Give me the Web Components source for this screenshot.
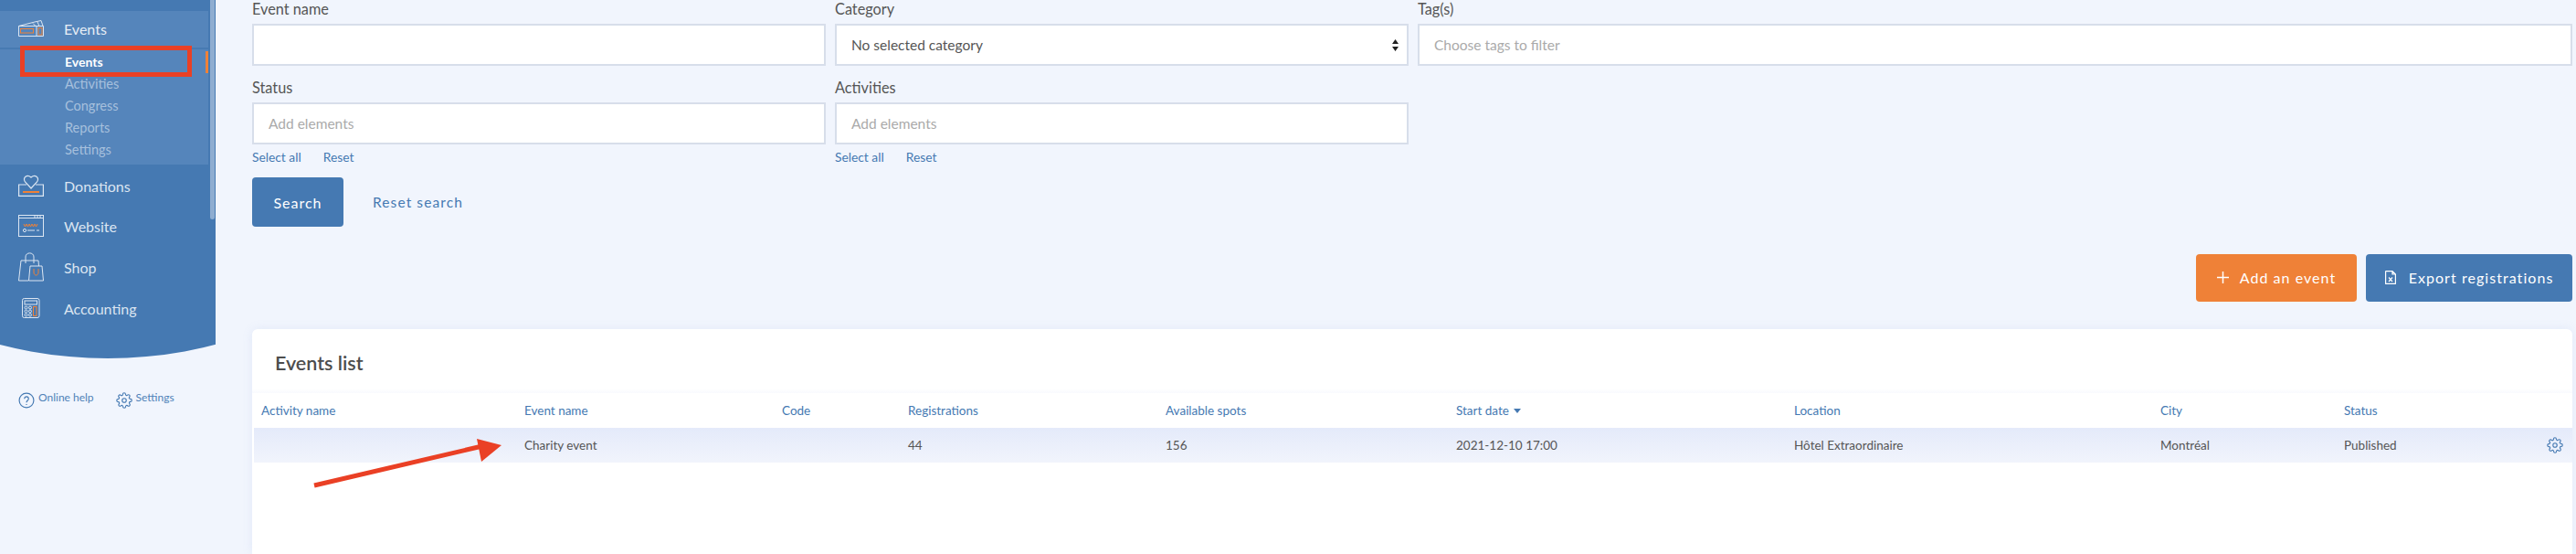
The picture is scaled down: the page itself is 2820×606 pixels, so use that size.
<!DOCTYPE html>
<html>
<head>
<meta charset="utf-8">
<style>
  html, body { margin: 0; height: 606px; overflow: hidden; background: #f1f5fd; }
  body { font-family: "Lato", "Open Sans", sans-serif; color: #4d4d4d; }
  app-shell { width: 2820px; height: 606px; }
</style>
</head>
<body>
<app-shell>
  <side-nav slot="side"></side-nav>
  <filter-form></filter-form>
  <action-bar></action-bar>
  <events-table></events-table>
</app-shell>
<script>
const ICONS = {
  events: `<svg width="28" height="18" viewBox="0 0 28 18" fill="none" stroke="#dce6f2" stroke-width="1"><path d="M.5 6.5 L18 2 L25 .5 L27 6.500 M.5 6.5 H27.5 V17.5 H.5 Z M20 6.5 V17.5"/><path d="M16 3.500 L19 6.500 M21 2 L23 6.500"/><rect x="2.5" y="9.500" width="14" height="4.500" stroke="#ef8137"/><rect x="22" y="8.5" width="4" height="7.500" stroke="#ef8137"/></svg>`,
  donations: `<svg width="28" height="24" viewBox="0 0 28 24" fill="none" stroke="#dce6f2" stroke-width="1.200"><path d="M14 15 L7.500 8 C4.500 3.500 9.500 -1 14 3 C18.500 -1 23.500 3.500 20.500 8 Z"/><path d="M9 11 H.6 V23.400 H27.400 V11 H19"/><path d="M5 19 H23" stroke="#ef8137" stroke-width="2"/></svg>`,
  website: `<svg width="28" height="24" viewBox="0 0 28 24" fill="none" stroke="#dce6f2" stroke-width="1"><rect x=".5" y=".5" width="27" height="23"/><path d="M.5 3.5 H27.5 M18 .5 V3.5 M21 .5 V3.5 M24 .5 V3.5"/><path d="M6 10 l1.500 3 1.500-3 1.500 3 1.500-3 1.500 3 1.500-3 1.500 3 1.500-3 1.500 3 1.500-3" stroke="#ef8137"/><circle cx="7" cy="17" r="1.600"/><path d="M10 17 H18 M20 17 H23"/></svg>`,
  shop: `<svg width="28" height="32" viewBox="0 0 28 32" fill="none" stroke="#dce6f2" stroke-width="1"><path d="M11 31 H.5 L3 9 H22 L22.5 15"/><path d="M8 12 V5 C8 -.5 17 -.5 17 5 V12"/><path d="M13 15 H26 L27.5 31 H11.500 Z"/><path d="M17 18 V22 C17 26 22 26 22 22 V18" stroke="#ef8137"/></svg>`,
  accounting: `<svg width="20" height="22" viewBox="0 0 20 22" fill="none" stroke="#dce6f2" stroke-width="1"><rect x=".5" y=".5" width="18.500" height="21" rx="2"/><rect x="3" y="3" width="13.500" height="4"/><circle cx="4.500" cy="10.500" r="1.500"/><circle cx="9" cy="10.500" r="1.500"/><circle cx="4.500" cy="14.500" r="1.500"/><circle cx="9" cy="14.500" r="1.500"/><circle cx="4.500" cy="18.500" r="1.500"/><circle cx="9" cy="18.500" r="1.500"/><rect x="12.500" y="9.500" width="3.500" height="10" stroke="#ef8137"/></svg>`,
  gear: (c, s) => `<svg width="${s}" height="${s}" viewBox="0 0 24 24" fill="none" stroke="${c}" stroke-width="1.500" stroke-linejoin="round"><circle cx="12" cy="12" r="3"/><path d="M19.400 15a1.650 1.650 0 0 0 .33 1.820l.06.060a2 2 0 1 1-2.830 2.830l-.06-.06a1.650 1.650 0 0 0-2.800 1.170V21a2 2 0 1 1-4 0v-.09a1.650 1.650 0 0 0-2.800-1.170l-.06.060a2 2 0 1 1-2.830-2.830l.06-.06a1.650 1.650 0 0 0-1.170-2.800H3a2 2 0 1 1 0-4h.09a1.650 1.650 0 0 0 1.170-2.800l-.06-.06a2 2 0 1 1 2.830-2.830l.06.060a1.650 1.650 0 0 0 2.800-1.170V3a2 2 0 1 1 4 0v.09a1.650 1.650 0 0 0 2.800 1.170l.06-.06a2 2 0 1 1 2.830 2.830l-.06.060a1.650 1.650 0 0 0 1.170 2.800H21a2 2 0 1 1 0 4h-.09a1.650 1.650 0 0 0-1.510 1z"/></svg>`,
};

class AppShell extends HTMLElement {
  constructor() {
    super();
    this.attachShadow({ mode: 'open' }).innerHTML = `
      <style>
        :host { display: flex; align-items: flex-start; }
        .main { flex: 1; min-width: 0; padding: 0 4px 0 40px; }
      </style>
      <slot name="side"></slot>
      <div class="main"><slot></slot></div>`;
  }
}

class SideNav extends HTMLElement {
  constructor() {
    super();
    const item = (icon, label, h) => `<div class="item" style="height:${h}px"><span class="ic">${ICONS[icon]}</span>${label}</div>`;
    this.attachShadow({ mode: 'open' }).innerHTML = `
      <style>
        :host { display: block; width: 236px; flex: none; height: 606px; position: relative; font-size: 16px; }
        .panel { width: 236px; height: 392px; background: #4579b2; clip-path: ellipse(431px 392px at 118px 0); box-sizing: border-box; padding-top: 12px; position: relative; }
        .bar { position: absolute; left: 230px; top: 0; width: 5px; height: 240px; background: #8eadd1; border-radius: 0 0 3px 3px; }
        .open { width: 228px; height: 168px; background: #5585bb; color: #e6edf5; }
        .head { height: 38px; padding-bottom: 2px; display: flex; align-items: center; border-bottom: 2px solid #477ab2; box-sizing: content-box; }
        .ic { width: 71px; flex: none; display: flex; justify-content: center; padding-right: 1px; box-sizing: border-box; margin-left: -1px; }
        .sub { font-size: 14.500px; color: #a7c0dd; padding: 2px 0 0 71px; position: relative; }
        .sub div { height: 24px; line-height: 24px; }
        .sub .on { color: #fff; font-weight: 700; font-size: 14px; }
        .mark { position: absolute; right: 0; top: 2px; width: 3px; height: 24px; background: #ef8137; }
        .item { display: flex; align-items: center; color: #dbe5f1; }
        .list { padding-top: 1px; }
        .help { position: absolute; left: 20px; top: 428px; display: flex; gap: 24px; font-size: 12px; color: #4f82b8; }
        .help span { display: flex; align-items: flex-start; gap: 4px; line-height: 13px; }
        .help svg { margin-top: 1px; }
      </style>
      <div class="panel">
        <div class="bar"></div>
        <div class="open">
          <div class="head"><span class="ic">${ICONS.events}</span>Events</div>
          <div class="sub">
            <span class="mark"></span>
            <div class="on">Events</div><div>Activities</div><div>Congress</div><div>Reports</div><div>Settings</div>
          </div>
        </div>
        <div class="list">
          ${item('donations', 'Donations', 44)}
          ${item('website', 'Website', 44)}
          ${item('shop', 'Shop', 46)}
          ${item('accounting', 'Accounting', 44)}
        </div>
      </div>
      <div class="help">
        <span><svg width="18" height="18" viewBox="0 0 20 20" fill="none" stroke="#4579b2" stroke-width="1.300"><circle cx="10" cy="10" r="8.800"/><path d="M7.500 8 C7.500 4.500 12.500 4.500 12.500 8 C12.500 10 10 10 10 12.500 M10 14.500 V15.500"/></svg>Online help</span>
        <span>${ICONS.gear('#4579b2', 18)}Settings</span>
      </div>`;
  }
}

class FormField extends HTMLElement {
  constructor() {
    super();
    const label = this.getAttribute('label');
    const ph = this.getAttribute('placeholder') || '';
    const value = this.getAttribute('value') || '';
    const links = this.hasAttribute('links');
    this.attachShadow({ mode: 'open' }).innerHTML = `
      <style>
        :host { display: block; font-size: 15.500px; }
        label { display: block; height: 26px; line-height: 19px; color: #555; font-size: 16.300px; }
        .box { height: 46px; box-sizing: border-box; border: 2px solid #d7deea; background: #fff; display: flex; align-items: center; padding: 0 16px; color: #aaa; position: relative; }
        .val { color: #555; }
        .arrows { position: absolute; right: 9px; top: 14px; }
        .links { display: flex; height: 26px; align-items: center; gap: 24px; color: #4579b2; font-size: 13.800px; }
      </style>
      <label>${label}</label>
      <div class="box">${value ? `<span class="val">${value}</span><svg class="arrows" width="7" height="15" viewBox="0 0 7 15" fill="#222"><path d="M3.500 1 7 6H0zM3.500 14 0 9h7z"/></svg>` : ph}</div>
      ${links ? `<div class="links"><span>Select all</span><span>Reset</span></div>` : ''}`;
  }
}

class FilterForm extends HTMLElement {
  constructor() {
    super();
    this.attachShadow({ mode: 'open' }).innerHTML = `
      <style>
        :host { display: block; }
        .grid { display: grid; grid-template-columns: 628px 628px 1fr; column-gap: 10px; row-gap: 14px; margin-top: 0; }
        .row { display: flex; align-items: center; margin-top: 10px; }
        .btn { width: 100px; height: 54px; background: #4579b2; color: #fff; border-radius: 4px; display: flex; align-items: center; justify-content: center; font-size: 16px; letter-spacing: 1px; }
        .reset { margin-left: 32px; color: #4579b2; font-size: 15.500px; letter-spacing: 1.100px; }
      </style>
      <div class="grid">
        <form-field label="Event name"></form-field>
        <form-field label="Category" value="No selected category"></form-field>
        <form-field label="Tag(s)" placeholder="Choose tags to filter"></form-field>
        <form-field label="Status" placeholder="Add elements" links></form-field>
        <form-field label="Activities" placeholder="Add elements" links></form-field>
      </div>
      <div class="row"><div class="btn">Search</div><div class="reset">Reset search</div></div>`;
  }
}

class ActionBar extends HTMLElement {
  constructor() {
    super();
    this.attachShadow({ mode: 'open' }).innerHTML = `
      <style>
        :host { display: flex; justify-content: flex-end; gap: 10px; margin-top: 30px; font-size: 16px; letter-spacing: 1.050px; color: #fff; }
        div { height: 52px; padding-bottom: 2px; border-radius: 4px; display: flex; align-items: center; justify-content: center; box-sizing: border-box; gap: 10px; }
        .add { width: 176px; background: #ef8137; }
        .exp { width: 226px; background: #4579b2; }
      </style>
      <div class="add"><svg width="13" height="13" viewBox="0 0 13 13" stroke="#fff" stroke-width="1.500"><path d="M6.500 0V13M0 6.500H13"/></svg><span style="margin-left:2px">Add an event</span></div>
      <div class="exp"><svg width="12" height="15" viewBox="0 0 12 15" fill="none" stroke="#fff" stroke-width="1.200"><path d="M1 .6H8L11.400 4V14.400H.6V1Z M8 .6V4H11.400"/><path d="M4 7.500 8 12M8 7.500 4 12"/></svg><span style="margin-left:4px">Export registrations</span></div>`;
  }
}

class EventsTable extends HTMLElement {
  constructor() {
    super();
    const cols = ['Activity name', 'Event name', 'Code', 'Registrations', 'Available spots', 'Start date', 'Location', 'City', 'Status'];
    const row = ['', 'Charity event', '', '44', '156', '2021-12-10 17:00', 'Hôtel Extraordinaire', 'Montréal', 'Published'];
    this.attachShadow({ mode: 'open' }).innerHTML = `
      <style>
        :host { display: block; margin-top: 30px; height: 246px; background: #fff; border-radius: 6px 6px 0 0; box-shadow: 0 0 12px rgba(120,150,210,.12); position: relative; }
        h2 { margin: 0; height: 65px; padding: 20px 0 0 25px; box-sizing: border-box; font-size: 21.500px; line-height: 34px; font-weight: 600; color: #4d4d4d; }
        .tint { height: 5px; background: linear-gradient(#fff, #f9fafe); }
        .r { display: grid; grid-template-columns: 288px 282px 138px 282px 318px 370px 401px 201px 1fr; margin-left: 2px; padding-left: 8px; font-size: 13.500px; align-items: center; height: 38px; }
        .th { color: #4579b2; }
        .td { background: linear-gradient(#e4eafa, #f1f4fc); color: #555; position: relative; }
        .caret { display: inline-block; margin-left: 5px; vertical-align: 2px; border: 4px solid transparent; border-top: 5px solid #4579b2; border-bottom: 0; }
        .gear { position: absolute; right: 10px; top: 10px; display: flex; }
      </style>
      <h2>Events list</h2>
      <div class="tint"></div>
      <div class="r th">${cols.map((c) => `<span>${c}${c === 'Start date' ? '<i class="caret"></i>' : ''}</span>`).join('')}</div>
      <div class="r td">${row.map((c) => `<span>${c}</span>`).join('')}<span class="gear">${ICONS.gear('#4579b2', 18)}</span></div>`;
  }
}

class RedMarks extends HTMLElement {
  constructor() {
    super();
    this.attachShadow({ mode: 'open' }).innerHTML = `
      <style>
        :host { position: absolute; left: 0; top: 0; width: 2820px; height: 606px; pointer-events: none; }
      </style>
      <svg width="2820" height="606">
        <rect x="24.500" y="52.500" width="183" height="29" fill="none" stroke="#ea4025" stroke-width="5"/>
        <path d="M344 531 L528 488" stroke="#ea4025" stroke-width="5"/>
        <path d="M549 487 L522 480 L527 505 Z" fill="#ea4025"/>
      </svg>`;
  }
}

customElements.define('app-shell', AppShell);
customElements.define('side-nav', SideNav);
customElements.define('form-field', FormField);
customElements.define('filter-form', FilterForm);
customElements.define('action-bar', ActionBar);
customElements.define('events-table', EventsTable);
customElements.define('red-marks', RedMarks);
document.body.append(document.createElement('red-marks'));
</script>
</body>
</html>
